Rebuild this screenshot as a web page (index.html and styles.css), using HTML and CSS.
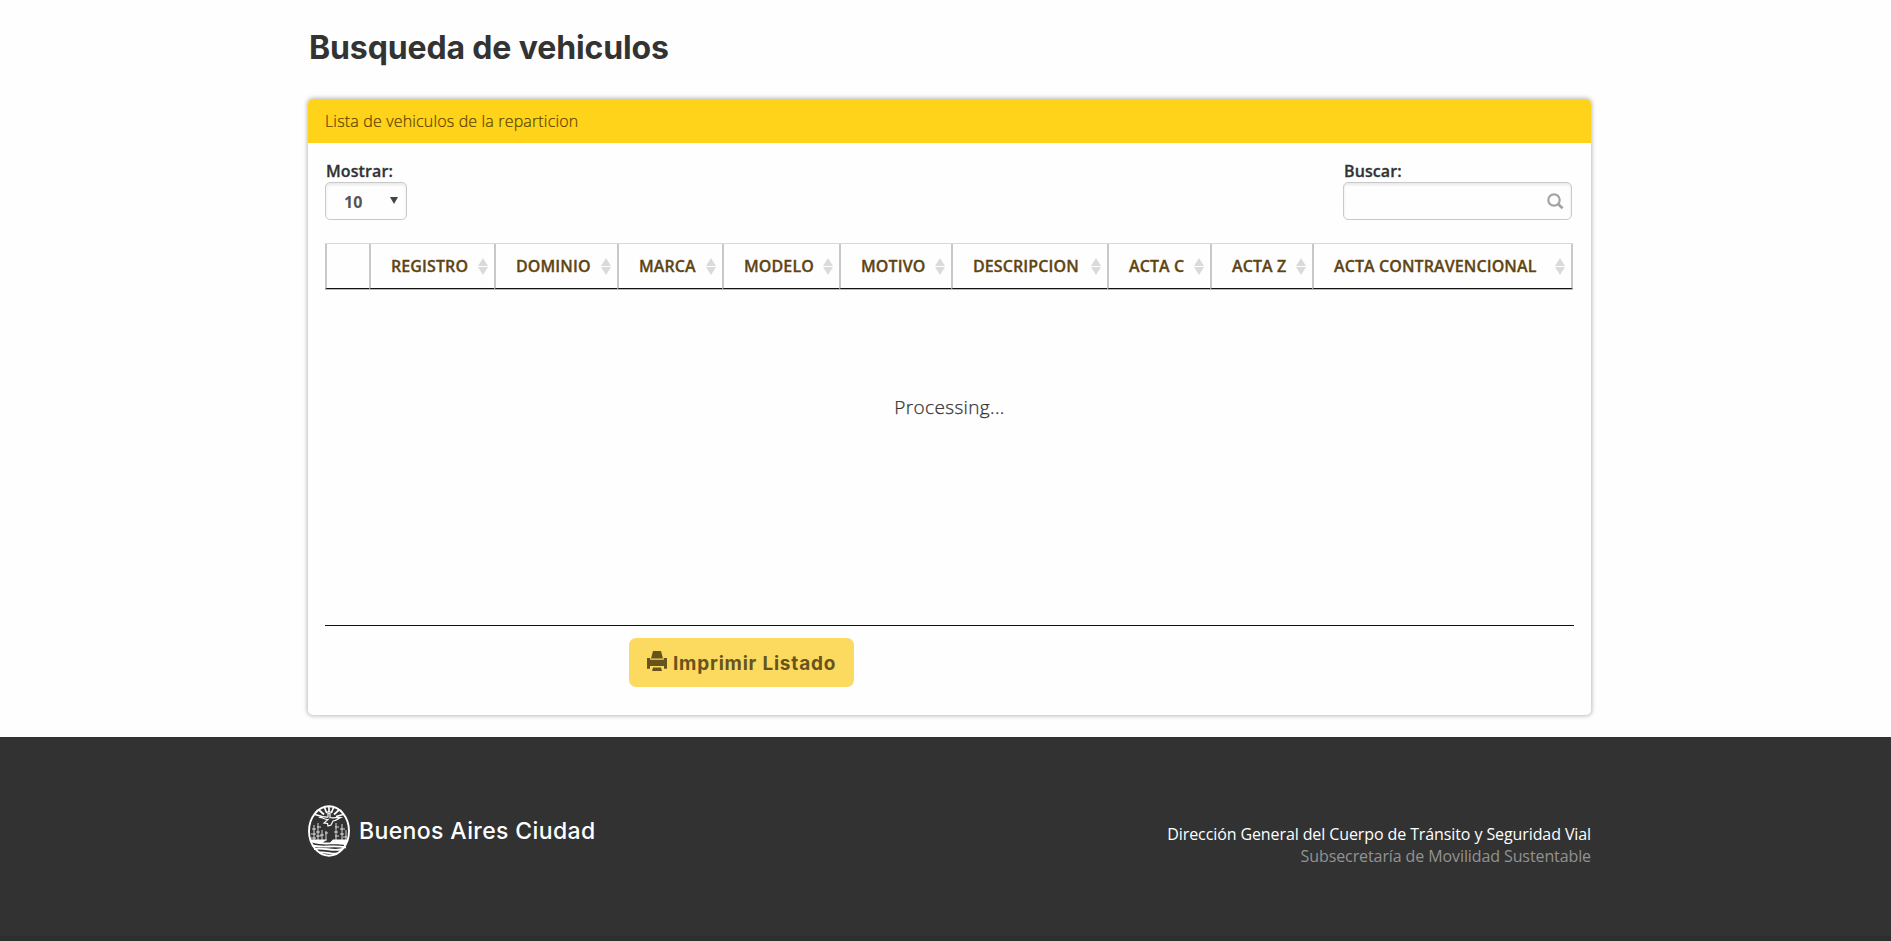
FILE: index.html
```html
<!DOCTYPE html>
<html lang="es">
<head>
<meta charset="utf-8">
<title>Busqueda de vehiculos</title>
<link rel="stylesheet" href="styles.css">
</head>
<body>
<main class="container">
  <h1 class="title"><span>Busqueda de vehiculos</span></h1>
  <section class="panel">
    <header class="panel-head"><span>Lista de vehiculos de la reparticion</span></header>
    <div class="panel-body">
      <div class="controls">
        <div class="field">
          <label class="label"><span>Mostrar:</span></label>
          <div class="select"><span class="value">10</span><svg class="caret" width="8" height="7" viewBox="0 0 8 7"><path d="M0 0h8L4 7z" fill="#444"/></svg></div>
        </div>
        <div class="field">
          <label class="label"><span>Buscar:</span></label>
          <div class="search"><svg width="17" height="17" viewBox="0 0 17 17" fill="none" stroke="#a3a3a3"><circle cx="7" cy="7" r="5.7" stroke-width="2.2"/><path d="M11 11l4.6 4.3" stroke-width="2.8"/></svg></div>
        </div>
      </div>
      <div class="grid-head">
        <div class="th"></div>
        <div class="th"><span>REGISTRO</span><i class="sort"></i></div>
        <div class="th"><span>DOMINIO</span><i class="sort"></i></div>
        <div class="th"><span>MARCA</span><i class="sort"></i></div>
        <div class="th"><span>MODELO</span><i class="sort"></i></div>
        <div class="th"><span>MOTIVO</span><i class="sort"></i></div>
        <div class="th"><span>DESCRIPCION</span><i class="sort"></i></div>
        <div class="th"><span>ACTA C</span><i class="sort"></i></div>
        <div class="th"><span>ACTA Z</span><i class="sort"></i></div>
        <div class="th"><span>ACTA CONTRAVENCIONAL</span><i class="sort"></i></div>
      </div>
      <div class="grid-body"><span>Processing...</span></div>
      <button class="print" type="button"><svg width="20" height="20" viewBox="0 0 20 20" fill="currentColor"><path d="M6 0h8l2 7.6H4zM0 7h3.2v1.8h13.6V7H20v10.800h-3V15H3v2.800H0zM6 16.600h8l1 3.400H5z"/></svg><span>Imprimir Listado</span></button>
    </div>
  </section>
</main>
<footer class="footer">
  <div class="footer-inner">
    <div class="brand">
      <svg width="42" height="52" viewBox="0 0 42 52" fill="none" stroke="#fff">
        <ellipse cx="21" cy="26" rx="20" ry="24.7" stroke-width="1.9"/>
        <path d="M21 2v5M16.500 2.500l2 5M25.500 2.500l-2 5M11 5l5 4.500M31 5l-5 4.500M7 9.500l7 2M35 9.500l-7 2" stroke-width="1.700"/>
        <path d="M18 8q3-2.500 6 0" stroke-width="1.200"/>
        <path d="M20 8l2 .5v4c3 1.500 7-1 11 0-3 1-4 3.500-8 3.500l-2 4-3 1-.5-2.500-3.500-.5 4-3.500c-3 .5-5-2-8-2 3-2.500 6 .5 8-.5z" stroke-width="1.200"/>
        <path d="M6 20v16M10 18v18M14 25v11M18 26v10M28 18v18M34 19v17M38 25v11" stroke-width=".8"/>
        <path d="M4 24h4M3 29h5M3 33h5M9 22h4M8 27h4M8 31h5M12 30h4M17 28h3M27 22h4M26 27h4M27 31h4M32 24h5M32 29h4M35 32h4" stroke-width=".8"/>
        <path d="M2 34.500h17l-4 3h7l3-3h15l-2 6c-12-3-21 1-34-3z" fill="#fff" stroke="none"/>
        <path d="M4 40.500c12 3 21-1 34 2M6 44c10-2 19 3 29 0M11 47.500c7-1 13 2 18 1" stroke-width="1.900"/>
      </svg>
      <span class="brand-name">Buenos Aires Ciudad</span>
    </div>
    <div class="office">
      <div class="office-main"><span>Dirección General del Cuerpo de Tránsito y Seguridad Vial</span></div>
      <div class="office-sub"><span>Subsecretaría de Movilidad Sustentable</span></div>
    </div>
  </div>
</footer>
</body>
</html>
```
FILE: styles.css
```css
* { box-sizing: border-box; }
body {
  margin: 0;
  height: 941px;
  overflow: hidden;
  display: flex;
  flex-direction: column;
  background: #fefefe;
  color: #333;
  font: 16px/22px "Open Sans", sans-serif;
}
.container { width: 1283px; height: 737px; margin-left: 308px; flex: none; }
.title {
  margin: 0;
  height: 99px;
  padding: 27px 0 0 1px;
  font: 700 32px/42px Inter, sans-serif;
  letter-spacing: -.13px;
}
.panel {
  height: 616px;
  border-radius: 5px;
  background: #fefefe;
  box-shadow: 0 0 4px 1px #bbb;
  overflow: hidden;
}
.panel-head {
  height: 44px;
  padding: 11px 17px;
  background: #ffd31a;
  color: #5c4300;
  font-weight: 300;
  letter-spacing: .16px;
  -webkit-text-stroke: .2px currentColor;
}
.panel-body { padding: 17px 17px 0; }
.controls { display: flex; justify-content: space-between; width: 1247px; }
.label { display: block; height: 22px; padding-left: 1px; font-weight: 600; letter-spacing: .1px; -webkit-text-stroke: .3px currentColor; }
.select, .search {
  display: flex;
  align-items: center;
  height: 38px;
  border: 1px solid #c9c9c9;
  border-radius: 5px;
  box-shadow: inset 0 2px 3px #e8e8e8;
}
.select { width: 82px; padding: 2px 8px 0 18px; justify-content: space-between; color: #555; font-weight: 700; }
.caret { margin-top: -4px; }
.search { width: 229px; justify-content: flex-end; padding-right: 7px; }
.grid-head {
  display: grid;
  grid-template-columns: 44px 125px 123px 105px 117px 112px 156px 103px 102px 261px;
  width: 1248px;
  height: 47px;
  margin-top: 23px;
  border-top: 1px solid #d8d8d8;
  border-bottom: 1px solid #bbb;
}
.th {
  display: flex;
  align-items: center;
  justify-content: space-between;
  padding: 0 6px 0 20px;
  border-left: 2px solid #c8c8c8;
  border-bottom: 1px solid #111;
  color: #5e4512;
  font-weight: 600;
  letter-spacing: .1px;
  -webkit-text-stroke: .3px currentColor;
  white-space: nowrap;
}
.th:last-child { border-right: 2px solid #c8c8c8; }
.sort { display: flex; flex-direction: column; gap: 1px; }
.sort::before, .sort::after { content: ""; border: 5px solid transparent; }
.sort::before { border-top: 0; border-bottom: 8px solid #dadada; }
.sort::after { border-bottom: 0; border-top: 8px solid #dadada; }
.grid-body {
  width: 1249px;
  height: 336px;
  padding-top: 106px;
  border-bottom: 1px solid #111;
  text-align: center;
  font-size: 19px;
  line-height: 22px;
  font-weight: 300;
  letter-spacing: .35px;
  -webkit-text-stroke: .25px currentColor;
}
.print {
  display: flex;
  align-items: center;
  gap: 6px;
  width: 225px;
  height: 49px;
  margin: 12px 0 0 304px;
  padding: 0 18px;
  border: 0;
  border-radius: 7px;
  background: #fcd95f;
  color: #67541d;
  font: 700 19px/24px Inter, sans-serif;
  letter-spacing: .78px;
  white-space: nowrap;
}
.print svg { flex: none; margin-top: -3px; }
.print span { margin-top: 2px; }
.footer { flex: 1; background: #323232; border-bottom: 5px solid #2e2e2e; }
.footer-inner {
  display: flex;
  justify-content: space-between;
  width: 1283px;
  margin-left: 308px;
  padding-top: 68px;
}
.brand { display: flex; align-items: center; height: 52px; gap: 9px; }
.brand-name { color: #fff; font: 500 23px/30px Inter, sans-serif; letter-spacing: .38px; }
.office { padding-top: 18px; text-align: right; letter-spacing: -.1px; }
.office-main { color: #fff; }
.office-sub { color: #929292; }
```
